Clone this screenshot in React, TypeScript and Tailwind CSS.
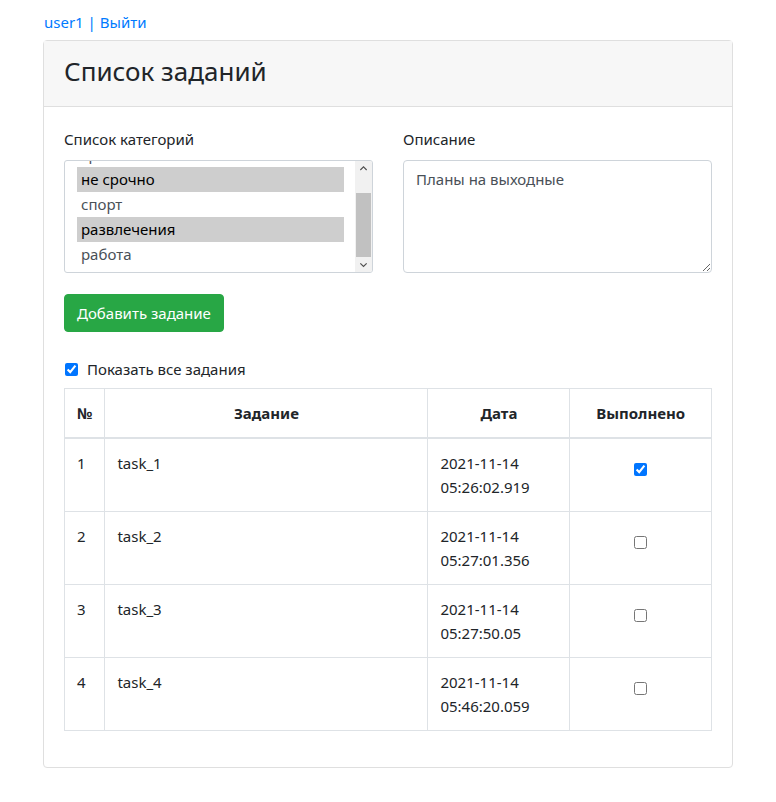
import React from 'react';

const categories = [
  { name: 'срочно', selected: false },
  { name: 'не срочно', selected: true },
  { name: 'спорт', selected: false },
  { name: 'развлечения', selected: true },
  { name: 'работа', selected: false },
];

const tasks = [
  { id: 1, name: 'task_1', date: '2021-11-14', time: '05:26:02.919', done: true },
  { id: 2, name: 'task_2', date: '2021-11-14', time: '05:27:01.356', done: false },
  { id: 3, name: 'task_3', date: '2021-11-14', time: '05:27:50.05', done: false },
  { id: 4, name: 'task_4', date: '2021-11-14', time: '05:46:20.059', done: false },
];

export default function App() {
  return (
    <div className="min-h-[802px] bg-white font-['Noto_Sans',sans-serif] text-[#212529] text-[15px] leading-6">
      <div className="w-[690px] ml-[43px]">
        {/* user links */}
        <div className="pt-[10px] pb-[6px] pl-[1px] text-[#007bff]">
          <a href="#">user1</a> | <a href="#">Выйти</a>
        </div>

        {/* card */}
        <div className="border border-[#dfdfdf] rounded-[4px]">
          <div className="bg-[#f7f7f7] border-b border-[#dfdfdf] px-5 pt-[13px] h-[66px]">
            <h3 className="text-[26px] leading-[34px] font-normal">Список заданий</h3>
          </div>

          <div className="p-5">
            <div className="flex gap-[30px]">
              {/* categories */}
              <div className="w-[309px]">
                <div className="mb-[9px]">Список категорий</div>
                <div className="relative h-[113px] border border-[#ced4da] rounded-[3px] overflow-hidden bg-white">
                  <div className="absolute left-[12px] top-[-20px] w-[267px] pt-[1px]">
                    {categories.map((c) => (
                      <div
                        key={c.name}
                        className={
                          c.selected
                            ? 'h-[25px] pl-1 bg-[#cecece] text-black leading-[25px]'
                            : 'h-[25px] pl-1 text-[#495057] leading-[25px]'
                        }
                      >
                        {c.name}
                      </div>
                    ))}
                  </div>
                  {/* scrollbar */}
                  <div className="absolute right-0 top-0 bottom-0 w-[17px] bg-[#f1f1f1] flex flex-col items-center">
                    <svg width="17" height="17" viewBox="0 0 17 17">
                      <path d="M5 10 L8.5 6.5 L12 10" fill="none" stroke="#505050" strokeWidth="1.3" />
                    </svg>
                    <div className="w-[15px] h-[70px] mt-[17px] bg-[#c1c1c1]" />
                    <div className="flex-1" />
                    <svg width="17" height="17" viewBox="0 0 17 17">
                      <path d="M5 7 L8.5 10.5 L12 7" fill="none" stroke="#505050" strokeWidth="1.3" />
                    </svg>
                  </div>
                </div>
              </div>

              {/* description */}
              <div className="w-[309px]">
                <div className="mb-[9px]">Описание</div>
                <textarea
                  className="block w-full h-[113px] border border-[#ced4da] rounded-[4px] px-3 py-[6px] text-[#495057] outline-none"
                  defaultValue="Планы на выходные"
                />
              </div>
            </div>

            <button className="mt-[21px] h-[38px] px-3 bg-[#28a745] text-white rounded-[4px] border border-[#28a745]">
              Добавить задание
            </button>

            <label className="flex items-center mt-[25px] h-6">
              <input type="checkbox" defaultChecked className="w-[13px] h-[13px] ml-[1px] mr-[9px] accent-[#0075ff]" />
              Показать все задания
            </label>

            {/* table */}
            <table className="mt-[7px] w-full border-collapse mb-4">
              <thead>
                <tr>
                  <th className="w-[40px] h-[49px] border border-[#dee2e6] border-b-2 px-3 text-left font-bold">№</th>
                  <th className="w-[323px] border border-[#dee2e6] border-b-2 px-3 text-center font-bold">Задание</th>
                  <th className="w-[142px] border border-[#dee2e6] border-b-2 px-3 text-center font-bold">Дата</th>
                  <th className="border border-[#dee2e6] border-b-2 px-3 text-center font-bold">Выполнено</th>
                </tr>
              </thead>
              <tbody>
                {tasks.map((t) => (
                  <tr key={t.id} className="h-[73px]">
                    <td className="border border-[#dee2e6] px-3 pt-3 pb-3 align-top">{t.id}</td>
                    <td className="border border-[#dee2e6] px-3 pt-3 pb-3 align-top">{t.name}</td>
                    <td className="border border-[#dee2e6] px-3 pt-3 pb-3 align-top">
                      {t.date}
                      <br />
                      {t.time}
                    </td>
                    <td className="border border-[#dee2e6] px-3 pt-[19px] align-top text-center">
                      <input
                        type="checkbox"
                        defaultChecked={t.done}
                        className="w-[13px] h-[13px] accent-[#0075ff]"
                      />
                    </td>
                  </tr>
                ))}
              </tbody>
            </table>
          </div>
        </div>
      </div>
    </div>
  );
}
